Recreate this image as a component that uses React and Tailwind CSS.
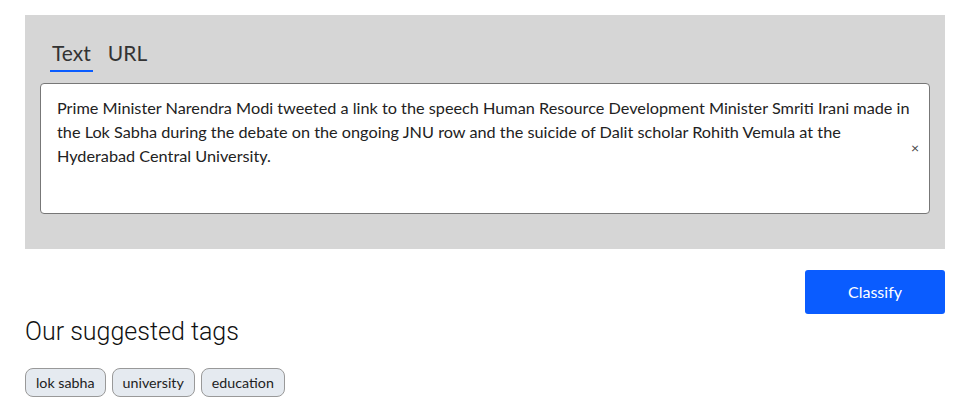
export default function App() {
  const tags = ["lok sabha", "university", "education"];

  return (
    <div className="w-[970px] h-[412px] bg-white px-[25px] pt-[15px] font-['Lato',sans-serif] text-[#333]">
      <div className="bg-[#d6d6d6] h-[234px] pt-[24px] px-[15px]">
        <div className="flex gap-[13px] pl-[10px] text-[21px] leading-[28px] text-[#333]">
          <div className="border-b-2 border-[#0a5cff] pb-[3px] px-[2px]">Text</div>
          <div className="px-[2px]">URL</div>
        </div>
        <div className="relative mt-[11px] h-[131px] bg-white border border-[#777] rounded-[4px] pl-[16px] pr-[12px] pt-[12px] text-[16.25px] leading-[24px] text-[#222] whitespace-nowrap">
          Prime Minister Narendra Modi tweeted a link to the speech Human Resource Development Minister Smriti Irani made in
          <br />
          the Lok Sabha during the debate on the ongoing JNU row and the suicide of Dalit scholar Rohith Vemula at the
          <br />
          Hyderabad Central University.
          <span className="absolute right-[10px] top-[52px] text-[14px] text-[#444]">×</span>
        </div>
      </div>
      <div className="flex justify-end mt-[21px]">
        <button className="w-[140px] h-[44px] rounded-[3px] bg-[#0a5cff] text-white text-[16px]">Classify</button>
      </div>
      <h2 className="mt-[2px] text-[25px] leading-[32px] font-light font-['Roboto',sans-serif] text-[#111]">
        Our suggested tags
      </h2>
      <div className="flex gap-[6px] mt-[20px]">
        {tags.map((t) => (
          <span key={t} className="h-[29px] px-[10px] flex items-center rounded-[8px] border border-[#999] bg-[#e5eaf0] text-[14.25px] text-[#222]">
            {t}
          </span>
        ))}
      </div>
    </div>
  );
}
